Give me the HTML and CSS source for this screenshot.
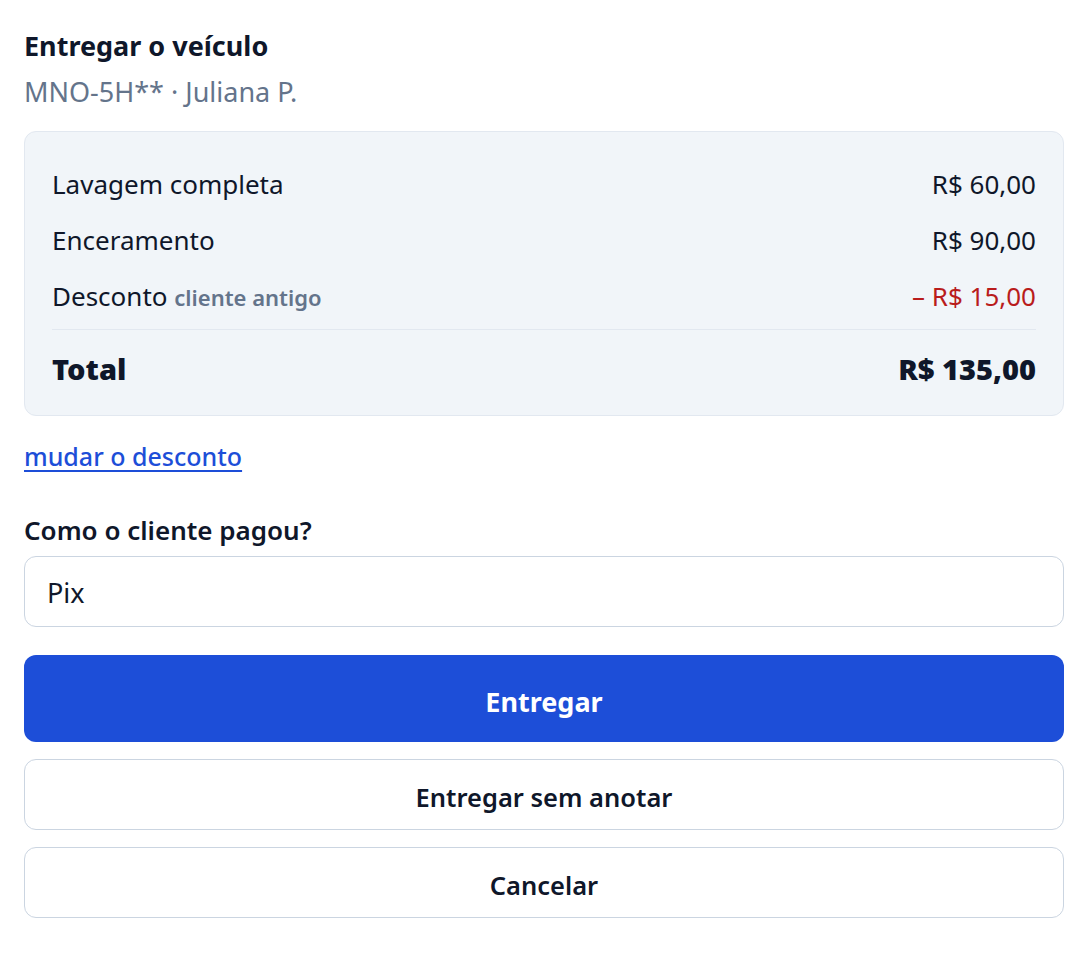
FILE: index.html
```html
<!DOCTYPE html>
<html lang="pt-BR">
<head>
<meta charset="utf-8">
<title>Entregar o veículo</title>
<link rel="stylesheet" href="styles.css">
</head>
<body>
<main class="sheet">
  <h1 class="title">Entregar o veículo</h1>
  <p class="subtitle">MNO-5H** · Juliana P.</p>

  <section class="summary">
    <div class="row"><span>Lavagem completa</span><span>R$ 60,00</span></div>
    <div class="row"><span>Enceramento</span><span>R$ 90,00</span></div>
    <div class="row"><span>Desconto <span class="note">cliente antigo</span></span><span class="neg">– R$ 15,00</span></div>
    <div class="divider"></div>
    <div class="row total"><span>Total</span><span>R$ 135,00</span></div>
  </section>

  <a class="link" href="#">mudar o desconto</a>

  <label class="label" for="pay">Como o cliente pagou?</label>
  <div class="input" id="pay">Pix</div>

  <button class="btn primary">Entregar</button>
  <button class="btn secondary">Entregar sem anotar</button>
  <button class="btn secondary">Cancelar</button>
</main>
</body>
</html>
```
FILE: styles.css
```css
* { box-sizing: border-box; }
html, body { margin: 0; padding: 0; background: #ffffff; }
body {
  font-family: "Noto Sans", "Open Sans", sans-serif;
  color: #0f172a;
}
.sheet {
  display: flex;
  flex-direction: column;
  padding: 28px 24px 24px;
}
.title {
  margin: 0;
  font-size: 27px;
  line-height: 36px;
  font-weight: 700;
  color: #0f172a;
}
.subtitle {
  margin: 10px 0 0;
  font-size: 27px;
  line-height: 36px;
  color: #64748b;
}
.summary {
  margin-top: 21px;
  background: #f1f5f9;
  border: 1px solid #e2e8f0;
  border-radius: 12px;
  padding: 24px 27px 24px 27px;
  display: flex;
  flex-direction: column;
}
.row {
  display: flex;
  justify-content: space-between;
  align-items: baseline;
  font-size: 26px;
  line-height: 56px;
  color: #0f172a;
}
.note {
  font-size: 22px;
  font-weight: 600;
  color: #64748b;
}
.neg { color: #b91c1c; }
.divider {
  margin-top: 4px;
  height: 1px;
  background: #e2e8f0;
}
.row.total {
  margin-top: 17px;
  line-height: 44px;
  font-size: 29px;
  font-weight: 900;
}
.link {
  margin-top: 24px;
  align-self: flex-start;
  font-size: 25px;
  line-height: 32px;
  font-weight: 500;
  color: #1d4ed8;
  text-decoration: underline;
  text-underline-offset: 4px;
}
.label {
  margin-top: 42px;
  font-size: 26px;
  line-height: 32px;
  font-weight: 600;
  color: #0f172a;
}
.input {
  margin-top: 10px;
  height: 71px;
  border: 1px solid #cbd5e1;
  border-radius: 12px;
  padding: 2px 22px 0;
  display: flex;
  align-items: center;
  font-size: 27px;
  color: #0f172a;
  background: #fff;
}
.btn {
  font-family: inherit;
  width: 100%;
  border-radius: 12px;
  cursor: pointer;
  padding: 5px 0 0;
}
.primary {
  margin-top: 28px;
  height: 87px;
  border: none;
  background: #1d4ed8;
  color: #ffffff;
  font-size: 27px;
  font-weight: 700;
}
.secondary {
  margin-top: 17px;
  height: 71px;
  border: 1px solid #cbd5e1;
  background: #ffffff;
  color: #0f172a;
  font-size: 25.5px;
  font-weight: 600;
}
```
